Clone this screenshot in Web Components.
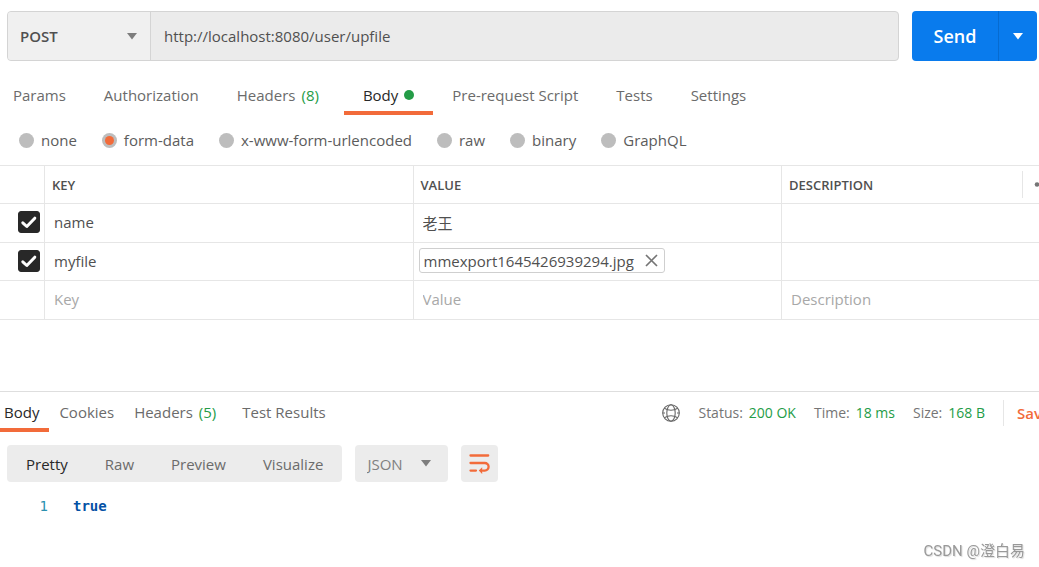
<!DOCTYPE html>
<html lang="en">
<head>
<meta charset="utf-8">
<meta name="viewport" content="width=device-width, initial-scale=1">
<title>POST request</title>
<style>
  html { height: 100%; }
  body {
    margin: 0;
    min-height: 100%;
    background: #fff;
    color: #505050;
    font: 15px/20px "Open Sans", "Noto Sans CJK SC", sans-serif;
    --line: #e6e6e6;
    --orange: #f26b3a;
    --green: #249c47;
    --fill: #ececec;
  }
</style>
</head>
<body>
<api-client></api-client>

<script>
const define = (name, html, setup) => {
  const tpl = document.createElement('template');
  tpl.innerHTML = `<style>
    *, ::before, ::after { box-sizing: border-box; }
    button, input, select { font: inherit; color: inherit; margin: 0; padding: 0; border: 0; background: none; border-radius: 0; outline-offset: -2px; }
    button { cursor: pointer; }
    svg { display: block; }
    [hidden] { display: none !important; }
  </style>` + html;
  customElements.define(name, class extends HTMLElement {
    constructor() {
      super();
      this.attachShadow({ mode: 'open' }).append(tpl.content.cloneNode(true));
    }
    connectedCallback() { if (setup) setup(this, this.shadowRoot); }
  });
};

/* Small downward triangle */
define('drop-caret', `
  <style>:host { display: block; color: #7d7d7d; pointer-events: none; }</style>
  <svg width="10" height="7" viewBox="0 0 10 7" aria-hidden="true"><path d="M0 0H10L5 6.5Z" fill="currentColor"/></svg>
`);

/* One tab of a tab strip: label in the slot, optional count and dot */
define('tab-item', `
  <style>
    :host { display: block; flex: none; color: #6b6b6b; }
    :host([active]) { color: #282828; }
    button { display: flex; align-items: center; height: 40px; padding: 0 var(--tab-pad, 19px); padding-left: var(--tab-start, var(--tab-pad, 19px)); position: relative; white-space: nowrap; }
    :host([active]) button::after { content: ""; position: absolute; left: 0; right: 0; bottom: 0; height: 4px; background: var(--orange); }
    .count { color: var(--green); margin: 0 6px; }
    .dot { width: 10px; height: 10px; border-radius: 5px; background: var(--green); margin-left: 6px; }
  </style>
  <button type="button" role="tab"><slot></slot><span class="count" hidden></span><span class="dot" hidden></span></button>
`, (el, root) => {
  root.querySelector('button').setAttribute('aria-selected', el.hasAttribute('active'));
  if (el.hasAttribute('count')) {
    const c = root.querySelector('.count');
    c.textContent = `(${el.getAttribute('count')})`;
    c.hidden = false;
  }
  root.querySelector('.dot').hidden = !el.hasAttribute('dot');
});

/* Method, address and Send */
define('url-bar', `
  <style>
    :host { display: flex; gap: 13px; padding: 11px 2px 0 7px; }
    .field { display: flex; flex: 1; min-width: 0; height: 50px; border: 1px solid #d4d4d4; border-radius: 4px; overflow: hidden; background: #ebebeb; }
    .method { display: grid; grid-template-columns: 1fr; align-items: center; width: 143px; flex: none; background: #f0f0f0; border-right: 1px solid #d4d4d4; }
    .method > * { grid-area: 1 / 1; }
    select { appearance: none; height: 48px; padding-left: 12px; font-weight: 600; }
    .method drop-caret { justify-self: end; margin-right: 13px; }
    input { flex: 1; min-width: 0; padding-left: 13px; }
    .send { display: flex; flex: none; border-radius: 4px; overflow: hidden; background: #097bed; color: #fff; }
    .go { width: 87px; font-size: 18px; font-weight: 600; border-right: 1px solid #066bd0; }
    .more { width: 38px; display: grid; place-items: center; }
    .more drop-caret { color: #fff; }
  </style>
  <div class="field">
    <div class="method"><select aria-label="Method"><option>POST</option></select><drop-caret></drop-caret></div>
    <input type="text" aria-label="Request URL" value="http://localhost:8080/user/upfile" spellcheck="false">
  </div>
  <div class="send">
    <button class="go" type="button">Send</button>
    <button class="more" type="button" aria-label="More send options"><drop-caret></drop-caret></button>
  </div>
`);

/* Body encoding choice */
define('body-type', `
  <style>
    :host { display: flex; align-items: center; gap: 25px; height: 50px; padding-left: 19px; color: #5c5c5c; }
    label { display: flex; align-items: center; gap: 7px; white-space: nowrap; }
    input { appearance: none; width: 15px; height: 15px; border-radius: 50%; background: #bdbdbd; display: grid; place-items: center; }
    input:checked::before { content: ""; width: 9px; height: 9px; border-radius: 50%; background: var(--orange); }
  </style>
  <label><input type="radio" name="t">none</label>
  <label><input type="radio" name="t" checked>form-data</label>
  <label><input type="radio" name="t">x-www-form-urlencoded</label>
  <label><input type="radio" name="t">raw</label>
  <label><input type="radio" name="t">binary</label>
  <label><input type="radio" name="t">GraphQL</label>
`);

/* Row tick box */
define('row-check', `
  <style>
    :host { display: grid; width: 22px; height: 22px; }
    :host > *, input, svg { grid-area: 1 / 1; }
    input { appearance: none; width: 22px; height: 22px; border-radius: 3px; border: 1px solid #c0c0c0; }
    input:checked { background: #282828; border-color: #282828; }
    svg { pointer-events: none; }
  </style>
  <input type="checkbox" checked aria-label="Include row">
  <svg width="22" height="22" viewBox="0 0 22 22" aria-hidden="true"><path d="M4.8 11.8 8.8 15.5 16.8 7.2" fill="none" stroke="#fff" stroke-width="3" stroke-linecap="round" stroke-linejoin="round"/></svg>
`);

/* Attached file with a remove button */
define('file-chip', `
  <style>
    :host { display: flex; align-items: center; width: max-content; height: 25px; margin-left: 5px; padding: 0 6px 0 4px; gap: 11px; border: 1px solid #cfcfcf; border-radius: 3px; line-height: 20px; }
  </style>
  <slot></slot>
  <button type="button" aria-label="Remove file"><svg width="13" height="13" viewBox="0 0 13 13"><path d="M1 1 12 12M12 1 1 12" stroke="#757575" stroke-width="1.7" fill="none"/></svg></button>
`);

/* Form-data key/value grid */
define('form-table', `
  <style>
    :host { display: block; overflow: hidden; }
    table { width: 100%; table-layout: fixed; border-spacing: 0; border-top: 1px solid var(--line); }
    .c1 { width: 45px; } .c4 { width: 257px; }
    th, td { padding: 0; height: 39px; border-bottom: 1px solid var(--line); border-right: 1px solid var(--line); text-align: left; }
    td { padding-bottom: 2px; }
    .short > * { height: 38px; }
    th:last-child, td:last-child { border-right: 0; }
    th { font-size: 13px; font-weight: 600; padding-left: 7px; }
    .desc { display: flex; align-items: center; justify-content: space-between; }
    .opts { width: 17px; height: 27px; border-left: 1px solid var(--line); overflow: hidden; }
    td input { display: block; width: 100%; height: 34px; padding-left: 9px; }
    input::placeholder { color: #a8a8a8; opacity: 1; }
    row-check { margin: 0 4px 0 auto; }
  </style>
  <table>
    <colgroup><col class="c1"><col><col><col class="c4"></colgroup>
    <thead><tr class="short"><th></th><th scope="col">KEY</th><th scope="col">VALUE</th>
      <th scope="col"><div class="desc">DESCRIPTION<button class="opts" type="button" aria-label="Options"><svg width="32" height="27" viewBox="0 0 32 27" fill="#757575"><circle cx="14" cy="13.5" r="2.3"/><circle cx="21" cy="13.5" r="2.3"/><circle cx="28" cy="13.5" r="2.3"/></svg></button></div></th></tr></thead>
    <tbody>
      <tr><td><row-check></row-check></td><td><input aria-label="Key" value="name"></td><td><input aria-label="Value" value="老王"></td><td><input aria-label="Description"></td></tr>
      <tr class="short"><td><row-check></row-check></td><td><input aria-label="Key" value="myfile"></td><td><file-chip>mmexport1645426939294.jpg</file-chip></td><td><input aria-label="Description"></td></tr>
      <tr><td></td><td><input aria-label="Key" placeholder="Key"></td><td><input aria-label="Value" placeholder="Value"></td><td><input aria-label="Description" placeholder="Description"></td></tr>
    </tbody>
  </table>
`);

/* Status, time and size of the response */
define('response-meta', `
  <style>
    :host { display: flex; align-items: center; font-size: 14px; color: #757575; white-space: nowrap; padding-top: 2px; overflow: hidden; }
    svg { margin-right: 18px; }
    dl { display: flex; gap: 18px; margin: 0; }
    dl div { display: flex; gap: 6px; }
    dd { margin: 0; color: var(--green); }
    .save { height: 26px; width: 36px; margin-left: 18px; padding-left: 13px; border-left: 1px solid var(--line); color: var(--orange); font-size: 15px; font-weight: 600; text-align: left; overflow: hidden; }
  </style>
  <svg width="18" height="18" viewBox="0 0 18 18" fill="none" stroke="#666" stroke-width="1.1" role="img" aria-label="Network"><circle cx="9" cy="9" r="8.3"/><ellipse cx="9" cy="9" rx="4.2" ry="8.3"/><path d="M2.3 4.3Q9 8.2 15.7 4.3M2.3 13.7Q9 9.8 15.7 13.7M.7 9H3M15 9h2.3"/></svg>
  <dl>
    <div><dt>Status:</dt><dd>200 OK</dd></div>
    <div><dt>Time:</dt><dd>18 ms</dd></div>
    <div><dt>Size:</dt><dd>168 B</dd></div>
  </dl>
  <button class="save" type="button">Save</button>
`);

/* View modes, language and line wrap */
define('view-bar', `
  <style>
    :host { display: flex; gap: 13px; padding: 13px 7px 0; color: #6b6b6b; }
    .modes, .lang, .wrap { height: 37px; border-radius: 4px; background: var(--fill); }
    .modes { display: flex; gap: 37px; padding: 0 19px; }
    .on { color: #282828; }
    .lang { display: grid; align-items: center; width: 93px; color: #808080; }
    .lang > * { grid-area: 1 / 1; }
    select { appearance: none; height: 37px; padding-left: 12px; }
    drop-caret { justify-self: end; margin-right: 17px; }
    .wrap { width: 37px; display: grid; place-items: center; }
  </style>
  <div class="modes">
    <button class="on" type="button">Pretty</button><button type="button">Raw</button><button type="button">Preview</button><button type="button">Visualize</button>
  </div>
  <div class="lang"><select aria-label="Language"><option>JSON</option></select><drop-caret></drop-caret></div>
  <button class="wrap" type="button" aria-label="Wrap lines">
    <svg width="21" height="21" viewBox="0 0 21 21" fill="none" stroke="var(--orange)" stroke-width="2.3" stroke-linecap="round"><path d="M1.5 2.5H19.2M1.5 10H15.8A3.8 3.8 0 0 1 15.8 17.6H13.5M1.5 17.6H7"/><path d="M9.8 17.6 13.2 14.2V21Z" fill="var(--orange)" stroke="none"/></svg>
  </button>
`);

define('code-view', `
  <style>
    :host { display: block; padding-top: 14px; font: 14px/20px "DejaVu Sans Mono", monospace; }
    ol { list-style: none; margin: 0; padding: 0; }
    li { display: flex; gap: 25px; }
    span { width: 48px; text-align: right; color: #2b91af; }
    code { font: inherit; font-weight: 700; color: #0451a5; }
  </style>
  <ol><li><span>1</span><code>true</code></li></ol>
`);

define('api-client', `
  <style>
    :host { display: block; }
    .tabs { display: flex; }
    .request { padding-top: 14px; margin-left: -6px; }
    .response { border-top: 1px solid #dedede; margin-top: 71px; }
    .bar { display: flex; justify-content: space-between; }
    .bar .tabs { --tab-pad: 10px; }
    .bar tab-item[active] { --tab-start: 4px; }
    .mark { position: fixed; right: 14px; bottom: 6px; color: #999; font-family: Roboto, "Noto Sans CJK SC", sans-serif; text-shadow: 1px 1px 1px #ddd; }
  </style>
  <url-bar></url-bar>
  <div class="tabs request" role="tablist">
    <tab-item>Params</tab-item><tab-item>Authorization</tab-item><tab-item count="8">Headers</tab-item><tab-item active dot>Body</tab-item><tab-item>Pre-request Script</tab-item><tab-item>Tests</tab-item><tab-item>Settings</tab-item>
  </div>
  <body-type></body-type>
  <form-table></form-table>
  <section class="response">
    <div class="bar">
      <div class="tabs" role="tablist"><tab-item active>Body</tab-item><tab-item>Cookies</tab-item><tab-item count="5">Headers</tab-item><tab-item>Test Results</tab-item></div>
      <response-meta></response-meta>
    </div>
    <view-bar></view-bar>
    <code-view></code-view>
  </section>
  <div class="mark">CSDN @澄白易</div>
`);
</script>
</body>
</html>
